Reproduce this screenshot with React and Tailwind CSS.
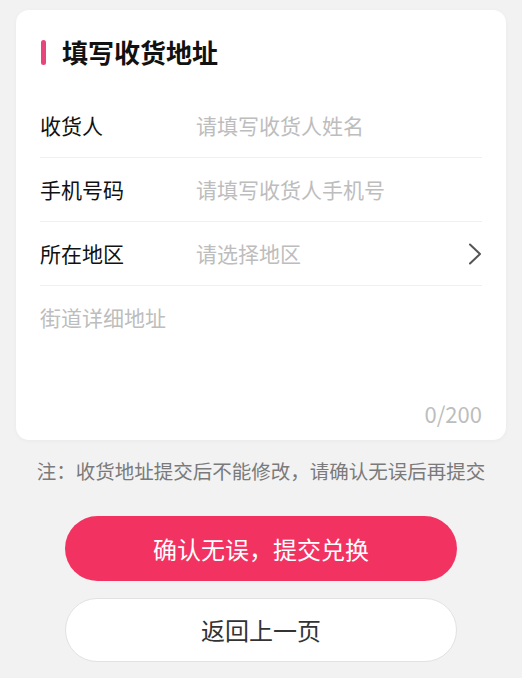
export default function App() {
  const rows = [
    { label: '收货人', placeholder: '请填写收货人姓名' },
    { label: '手机号码', placeholder: '请填写收货人手机号' },
    { label: '所在地区', placeholder: '请选择地区', arrow: true },
  ];

  return (
    <div
      className="min-h-[678px] bg-[#f2f2f2] pt-[10px]"
      style={{ fontFamily: '"Noto Sans CJK SC", "Noto Sans", sans-serif' }}
    >
      <div className="mx-4 rounded-[13px] bg-white px-6 shadow-[0_1px_4px_rgba(0,0,0,0.04)]">
        <div className="flex h-[84px] items-center">
          <span className="ml-[1px] h-[25px] w-[5px] rounded-full bg-[#e8457a]" />
          <h1 className="ml-4 text-[26px] font-bold leading-none text-[#111]">填写收货地址</h1>
        </div>

        {rows.map((row) => (
          <div key={row.label} className="flex h-[64px] items-center border-b border-[#f0f0f0]">
            <span className="w-[156px] text-[21px] text-[#111]">{row.label}</span>
            <span className="flex-1 text-[21px] text-[#bdbdbd]">{row.placeholder}</span>
            {row.arrow && (
              <svg className="h-[22px] w-[14px] text-[#555]" viewBox="0 0 14 22" fill="none">
                <path d="M2 1.5 L12 11 L2 20.5" stroke="currentColor" strokeWidth="2" strokeLinecap="round" strokeLinejoin="round" />
              </svg>
            )}
          </div>
        ))}

        <div className="flex h-[154px] flex-col pb-[13px] pt-[17px]">
          <span className="text-[21px] leading-[28px] text-[#bdbdbd]">街道详细地址</span>
          <span className="mt-auto self-end text-[22px] leading-[28px] text-[#bdbdbd]">0/200</span>
        </div>
      </div>

      <p className="mt-[17px] text-center text-[19.5px] leading-[28px] text-[#7a7a7a]">
        注：收货地址提交后不能修改，请确认无误后再提交
      </p>

      <div className="mt-[31px] flex flex-col items-center gap-[17px]">
        <button className="h-[65px] w-[392px] rounded-full bg-[#f23361] text-[24px] text-white">
          确认无误，提交兑换
        </button>
        <button className="h-[64px] w-[392px] rounded-full border border-[#e2e2e2] bg-white text-[24px] text-[#333]">
          返回上一页
        </button>
      </div>
    </div>
  );
}
